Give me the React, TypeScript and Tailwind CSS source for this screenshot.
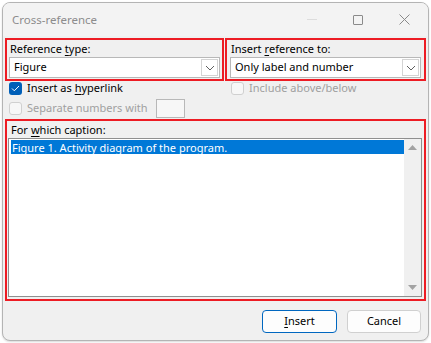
import React from "react";

const font = { fontFamily: '"Noto Sans", "Open Sans", sans-serif' };

function Chevron() {
  return (
    <svg width="10" height="6" viewBox="0 0 10 6" fill="none">
      <path d="M1 1l4 4 4-4" stroke="#606060" strokeWidth="1" />
    </svg>
  );
}

function Combo({ value, width }: { value: string; width: string }) {
  return (
    <div className={`${width} h-[21px] flex items-stretch bg-white border border-[#b8b8b8]`}>
      <div className="flex-1 flex items-center pl-[4px] text-[11px] text-black">{value}</div>
      <div className="w-[17px] flex items-center justify-center border border-[#d4d4d4] bg-white m-[1px]">
        <Chevron />
      </div>
    </div>
  );
}

function Check({ checked, disabled }: { checked?: boolean; disabled?: boolean }) {
  if (checked) {
    return (
      <div className="w-[13px] h-[13px] rounded-[3px] bg-[#005fb8] flex items-center justify-center">
        <svg width="9" height="7" viewBox="0 0 9 7" fill="none">
          <path d="M1 3.5l2.3 2.3L8 1" stroke="white" strokeWidth="1" />
        </svg>
      </div>
    );
  }
  return (
    <div
      className={`w-[13px] h-[13px] rounded-[3px] border ${
        disabled ? "border-[#d0d0d0] bg-[#f7f7f7]" : "border-[#888] bg-white"
      }`}
    />
  );
}

export default function App() {
  return (
    <div className="w-[431px] h-[343px] bg-white pt-[2px] pl-[2px]" style={font}>
      <div className="w-[427px] h-[339px] rounded-[8px] border border-[#b4b4b4] bg-[#f0f0f0] overflow-hidden flex flex-col shadow-[0_1px_2px_rgba(0,0,0,0.15)]">
        {/* title bar */}
        <div className="h-[33px] flex items-center bg-[#f3f3f3] pl-[9px] shrink-0">
          <span className="text-[11.5px] text-[#8c8c8c]">Cross-reference</span>
          <div className="ml-auto flex items-center">
            <div className="w-[46px] flex justify-center">
              <div className="w-[10px] h-px bg-[#dcdcdc]" />
            </div>
            <div className="w-[46px] flex justify-center">
              <div className="w-[10px] h-[10px] border border-[#8a8a8a] rounded-[1px]" />
            </div>
            <div className="w-[46px] flex justify-center mr-[1px]">
              <svg width="11" height="11" viewBox="0 0 11 11" fill="none">
                <path d="M0.5 0.5l10 10M10.5 0.5l-10 10" stroke="#8a8a8a" strokeWidth="1" />
              </svg>
            </div>
          </div>
        </div>

        <div className="pl-[2px] pr-[1px] pt-[2px] flex flex-col">
          {/* top row */}
          <div className="flex gap-[1px]">
            <div className="w-[219px] h-[43px] border-2 border-[#ed1c24] flex flex-col pl-[2px]">
              <div className="h-[16px] flex items-center pl-[1px] text-[11px] text-black leading-none">
                Reference <span className="underline underline-offset-2 ml-[3px]">t</span>ype:
              </div>
              <div className="mt-[1px]">
                <Combo value="Figure" width="w-[211px]" />
              </div>
            </div>
            <div className="w-[201px] h-[43px] border-2 border-[#ed1c24] flex flex-col pl-[3px]">
              <div className="h-[16px] flex items-center pl-[1px] text-[11px] text-black leading-none">
                Insert <span className="underline underline-offset-2 ml-[3px]">r</span>eference to:
              </div>
              <div className="mt-[1px]">
                <Combo value="Only label and number" width="w-[191px]" />
              </div>
            </div>
          </div>

          {/* checkbox rows */}
          <div className="flex h-[38px]">
            <div className="w-[220px] flex flex-col pl-[4px]">
              <div className="h-[15px] flex items-center gap-[5px] text-[11px] text-black">
                <Check checked />
                <span>
                  Insert as <span className="underline underline-offset-2">h</span>yperlink
                </span>
              </div>
              <div className="h-[19px] mt-[3px] flex items-center text-[11px] text-[#a0a0a0]">
                <Check disabled />
                <span className="ml-[5px]">Separate numbers with</span>
                <div className="ml-[9px] w-[29px] h-[19px] border border-[#b8b8b8] bg-[#f7f7f7]" />
              </div>
            </div>
            <div className="flex flex-col pl-[6px]">
              <div className="h-[15px] flex items-center gap-[5px] text-[11px] text-[#a0a0a0]">
                <Check disabled />
                <span>Include above/below</span>
              </div>
            </div>
          </div>

          {/* caption list */}
          <div className="w-[421px] h-[182px] border-2 border-[#ed1c24] flex flex-col pl-[1px] pr-[2px]">
            <div className="h-[17px] flex items-center pl-[3px] text-[11px] text-black leading-none">
              For <span className="underline underline-offset-2 ml-[3px]">w</span>hich caption:
            </div>
            <div className="h-[159px] border border-[#8f8f8f] bg-white flex">
              <div className="flex-1 pl-[2px] pt-[1px]">
                <div className="h-[14px] bg-[#0078d7] text-white text-[11px] flex items-center pl-[1px] leading-none">
                  Figure 1. Activity diagram of the program.
                </div>
              </div>
              <div className="w-[17px] bg-[#f0f0f0] flex flex-col items-center justify-between py-[6px]">
                <svg width="9" height="5" viewBox="0 0 9 5">
                  <path d="M4.5 0L9 5H0z" fill="#a3a3a3" />
                </svg>
                <svg width="9" height="5" viewBox="0 0 9 5">
                  <path d="M0 0h9L4.5 5z" fill="#a3a3a3" />
                </svg>
              </div>
            </div>
          </div>

          {/* buttons */}
          <div className="flex justify-end gap-[10px] pr-[6px] mt-[9px]">
            <button className="w-[75px] h-[23px] rounded-[4px] border border-[#0067c0] bg-[#fdfdfd] text-[11px] text-black">
              <span className="underline underline-offset-2">I</span>nsert
            </button>
            <button className="w-[74px] h-[23px] rounded-[4px] border border-[#d0d0d0] bg-[#fdfdfd] text-[11px] text-black">
              Cancel
            </button>
          </div>
        </div>
      </div>
    </div>
  );
}
